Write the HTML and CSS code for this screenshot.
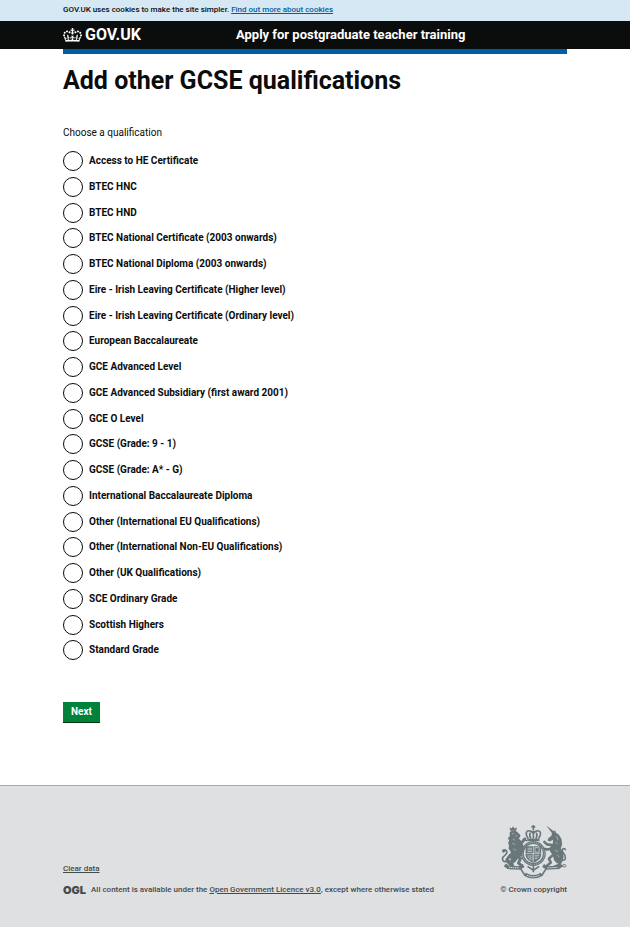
FILE: index.html
```html
<!DOCTYPE html>
<html lang="en">
<head>
<meta charset="utf-8">
<meta name="viewport" content="width=device-width, initial-scale=1">
<title>Add other GCSE qualifications - GOV.UK</title>
<link rel="stylesheet" href="styles.css">
</head>
<body>
<div class="cookie-banner">
  <p class="container cookie-text">GOV.UK uses cookies to make the site simpler. <a href="#cookies">Find out more about cookies</a></p>
</div>
<header class="header">
  <div class="container header-inner">
    <a class="logo" href="#home">
      <svg class="crown" viewBox="0 0 132 97" aria-hidden="true"><path fill="currentColor" fill-rule="evenodd" d="M25 30.2c3.5 1.5 7.7-.2 9.1-3.7 1.5-3.6-.2-7.8-3.9-9.2-3.6-1.4-7.6.3-9.1 3.9-1.4 3.5.3 7.5 3.9 9zM9 39.5c3.6 1.5 7.8-.2 9.2-3.7 1.5-3.6-.2-7.8-3.9-9.1-3.6-1.5-7.6.2-9.1 3.8-1.4 3.5.3 7.5 3.8 9zM4.4 57.2c3.5 1.5 7.7-.2 9.1-3.8 1.5-3.6-.2-7.7-3.9-9.1-3.5-1.5-7.6.3-9.1 3.8-1.4 3.5.3 7.6 3.9 9.1zm38.3-21.4c3.5 1.5 7.7-.2 9.1-3.8 1.5-3.6-.2-7.7-3.9-9.1-3.6-1.5-7.6.3-9.1 3.8-1.3 3.6.4 7.7 3.9 9.1zm64.4-5.6c-3.6 1.5-7.8-.2-9.1-3.7-1.5-3.6.2-7.8 3.8-9.2 3.6-1.4 7.7.3 9.2 3.9 1.3 3.5-.4 7.5-3.9 9zm15.9 9.3c-3.6 1.5-7.7-.2-9.1-3.7-1.5-3.6.2-7.8 3.7-9.1 3.6-1.5 7.7.2 9.2 3.8 1.5 3.5-.3 7.5-3.8 9zm4.7 17.7c-3.6 1.5-7.8-.2-9.2-3.8-1.5-3.6.2-7.7 3.9-9.1 3.6-1.5 7.7.3 9.2 3.8 1.3 3.5-.4 7.6-3.9 9.1zM89.3 35.8c-3.6 1.5-7.8-.2-9.2-3.8-1.4-3.6.2-7.7 3.9-9.1 3.6-1.5 7.7.3 9.2 3.8 1.4 3.6-.3 7.7-3.9 9.1zM69.7 17.7l8.9 4.7V9.3l-8.9 2.8c-.2-.3-.5-.6-.9-.9L72.4 0H59.6l3.5 11.2c-.3.3-.6.5-.9.9l-8.8-2.8v13.1l8.8-4.7c.3.3.6.7.9.9l-5 15.4v.1c-.2.8-.4 1.6-.4 2.4 0 4.1 3.1 7.5 7 8.1h.2c.3 0 .7.1 1 .1.4 0 .7 0 1-.1h.2c4-.6 7.1-4.1 7.1-8.1 0-.8-.1-1.7-.4-2.4V34l-5.1-15.4c.4-.2.7-.6 1-.9zM66 92.8c16.9 0 32.8 1.1 47.1 3.2 4-16.9 8.9-26.7 14-33.5l-9.6-3.4c1 4.9 1.1 7.2 0 10.2-1.5-1.4-3-4.3-4.2-8.7L108.6 76c2.8-2 5-3.2 7.5-3.3-4.4 9.4-10 11.9-13.6 11.2-4.3-.8-6.3-4.6-5.6-7.9 1-4.7 5.7-5.9 8-.5 4.3-8.7-3-11.4-7.6-8.8 7.1-7.2 7.9-13.5 2.1-21.1-8 6.1-8.1 12.3-4.5 20.8-4.7-5.4-12.1-2.5-9.5 6.2 3.4-5.2 7.9-2 7.2 3.1-.6 4.3-6.4 7.8-13.5 7.2-10.3-.9-10.9-8-11.2-13.8 2.5-.5 7.1 1.8 11 7.3L80.2 60c-4.1 4.4-8 5.3-12.3 5.4 1.4-4.4 8-11.6 8-11.6H55.5s6.4 7.2 7.9 11.6c-4.2-.1-8-1-12.3-5.4l1.4 16.4c3.9-5.5 8.5-7.7 10.9-7.3-.3 5.8-.9 12.8-11.1 13.8-7.2.6-12.9-2.9-13.5-7.2-.7-5 3.8-8.3 7.1-3.1 2.7-8.7-4.6-11.6-9.4-6.2 3.7-8.5 3.6-14.7-4.6-20.8-5.8 7.6-5 13.9 2.2 21.1-4.7-2.6-11.9.1-7.7 8.8 2.3-5.5 7.1-4.2 8.1.5.7 3.3-1.3 7.1-5.7 7.9-3.5.7-9-1.8-13.5-11.2 2.5.1 4.7 1.3 7.5 3.3l-4.7-15.4c-1.2 4.4-2.7 7.2-4.3 8.7-1.1-3-.9-5.3 0-10.2l-9.5 3.4c5 6.9 9.9 16.7 14 33.5 14.8-2.1 30.8-3.2 47.7-3.2z"/></svg>
      <span>GOV.UK</span>
    </a>
    <a class="service" href="#service">Apply for postgraduate teacher training</a>
  </div>
</header>
<main class="container main">
  <div class="bar"></div>
  <h1>Add other GCSE qualifications</h1>
  <form>
    <fieldset>
      <legend>Choose a qualification</legend>
      <div class="options">
        <label class="option"><input type="radio" name="q"><span>Access to HE Certificate</span></label>
        <label class="option"><input type="radio" name="q"><span>BTEC HNC</span></label>
        <label class="option"><input type="radio" name="q"><span>BTEC HND</span></label>
        <label class="option"><input type="radio" name="q"><span>BTEC National Certificate (2003 onwards)</span></label>
        <label class="option"><input type="radio" name="q"><span>BTEC National Diploma (2003 onwards)</span></label>
        <label class="option"><input type="radio" name="q"><span>Eire - Irish Leaving Certificate (Higher level)</span></label>
        <label class="option"><input type="radio" name="q"><span>Eire - Irish Leaving Certificate (Ordinary level)</span></label>
        <label class="option"><input type="radio" name="q"><span>European Baccalaureate</span></label>
        <label class="option"><input type="radio" name="q"><span>GCE Advanced Level</span></label>
        <label class="option"><input type="radio" name="q"><span>GCE Advanced Subsidiary (first award 2001)</span></label>
        <label class="option"><input type="radio" name="q"><span>GCE O Level</span></label>
        <label class="option"><input type="radio" name="q"><span>GCSE (Grade: 9 - 1)</span></label>
        <label class="option"><input type="radio" name="q"><span>GCSE (Grade: A* - G)</span></label>
        <label class="option"><input type="radio" name="q"><span>International Baccalaureate Diploma</span></label>
        <label class="option"><input type="radio" name="q"><span>Other (International EU Qualifications)</span></label>
        <label class="option"><input type="radio" name="q"><span>Other (International Non-EU Qualifications)</span></label>
        <label class="option"><input type="radio" name="q"><span>Other (UK Qualifications)</span></label>
        <label class="option"><input type="radio" name="q"><span>SCE Ordinary Grade</span></label>
        <label class="option"><input type="radio" name="q"><span>Scottish Highers</span></label>
        <label class="option"><input type="radio" name="q"><span>Standard Grade</span></label>
      </div>
    </fieldset>
    <button class="button" type="submit">Next</button>
  </form>
</main>
<footer class="footer">
  <div class="container footer-inner">
    <div class="meta">
      <a href="#clear">Clear data</a>
      <div class="licence">
        <span class="ogl">OGL</span>
        <p>All content is available under the <a href="#licence">Open Government Licence v3.0</a>, except where otherwise stated</p>
      </div>
    </div>
    <a class="copyright" href="#copyright">
      <svg class="arms" viewBox="0 0 204 168" aria-hidden="true">
        <!-- crown -->
        <g fill="none" stroke="currentColor" stroke-width="5">
          <path d="M100 2v16M94 8h12"/>
          <path d="M84 44C72 26 80 17 91 21c6 2 9 6 9 10 0-4 3-8 9-10 11-4 19 5 7 23M100 20v24M92 44c-4-8-4-14-1-18M108 44c4-8 4-14 1-18"/>
          <path d="M81 48h38" stroke-width="8"/>
        </g>
        <!-- shield inside the garter -->
        <circle cx="100" cy="90" r="34" fill="none" stroke="currentColor" stroke-width="9"/>
        <circle cx="100" cy="90" r="34" fill="none" stroke="#dee0e2" stroke-width="2" stroke-dasharray="3 3"/>
        <path fill="currentColor" d="M76 68h48v26c0 11-9 19-24 25-15-6-24-14-24-25z"/>
        <path fill="none" stroke="#dee0e2" stroke-width="2" d="M100 68v48M78 90h44M82 74h14M82 79h14M82 84h14M105 72v14h13V72zM84 94v8l8 8M90 94v14M96 94v18M104 96h14M104 101h12M104 106h8"/>
        <!-- lion -->
        <g fill="currentColor">
          <path d="M29 20l-3-10 7 3 4-7 5 7 7-3-2 10z"/>
          <path d="M27 24c7-6 20-6 25 1l8 8-1 7-5 2 9 10 7 15-1 18-7 12-8 9-16 3-9-8 1-16-7-10 2-9-3-8 3-8-4-8 6-5z"/>
          <path d="M25 92l18-4 12 14-9 12-8 7 4 10-8 4-10-10 6-16z"/>
        </g>
        <g fill="none" stroke="currentColor" stroke-linecap="round" stroke-linejoin="round">
          <path stroke-width="9" d="M52 60l14-5 6-9M54 72l13 3M46 92l14 14-6 14 10 8M28 96l-10 14 8 12"/>
          <path stroke-width="5" d="M72 46l4-3M72 48l6 2M26 112C5 122-1 106 11 97s8-22-5-17"/>
          <path stroke-width="7" d="M12 81l-5 3"/>
        </g>
        <!-- unicorn -->
        <g fill="currentColor">
          <path d="M140 4l26 20-7 5z"/>
          <path d="M158 24l9-5 3 7 9 6 8 13 2 17-4 12 6 12 3 16-8 14-13 4-9-9-4-16-9-12 2-14 7-10 1-11-10 5-7-3 2-7 10-8z"/>
        </g>
        <g fill="none" stroke="currentColor" stroke-linecap="round" stroke-linejoin="round">
          <path stroke-width="8" d="M158 64l-16-2-8-8M158 74l-14 4-8-2M164 92l-16 14 6 12-11 9M178 100l6 14-7 12-11 5"/>
          <path stroke-width="5" d="M184 108c20 10 17-11 9-19s-1-20 6-11"/>
          <path stroke-width="3" d="M168 112l14 13 13 7c7 2 8-9 0-8l-12 8M190 112l-9 16"/>
        </g>
        <path fill="none" stroke="#dee0e2" stroke-width="1.5" d="M34 29h7M36 45l8 5M34 58l10 5M38 76l9 5M50 35l-6 2M172 36l4 13M168 54l8 8M166 80l10 5M174 94l6 8"/>
        <!-- motto ribbon -->
        <g fill="none" stroke="currentColor" stroke-width="11">
          <path d="M12 125l10 8 35 2 13-8M188 125l-10 8-35 2-13-8"/>
          <path d="M74 154c16 10 36 10 52 0"/>
        </g>
        <path fill="none" stroke="currentColor" stroke-width="5" d="M60 136l14 22M140 136l-14 22M82 130l18 12 18-12M100 122v26"/>
        <path fill="none" stroke="#dee0e2" stroke-width="3" stroke-dasharray="4 2" d="M25 133l31 2M144 135l31-2M80 157c14 7 26 7 40 0"/>
      </svg>
      <span>© Crown copyright</span>
    </a>
  </div>
</footer>
</body>
</html>
```
FILE: styles.css
```css
* { box-sizing: border-box; }
body {
  margin: 0;
  min-height: 100vh;
  display: flex;
  flex-direction: column;
  font-family: Roboto, "Liberation Sans", sans-serif;
  font-size: 10px;
  line-height: 16px;
  color: #0b0c0c;
  background: #fff;
}
p { margin: 0; }
.container { width: 100%; padding: 0 10%; }
.cookie-banner { background: #d5e8f3; }
.cookie-text { padding-top: 2px; padding-bottom: 3px; font-size: 8px; font-weight: 500; }
.cookie-text a { color: #005ea5; }
.header { background: #0b0c0c; }
.header-inner {
  display: grid;
  grid-template-columns: 173px 1fr;
  align-items: center;
  height: 28px;
  color: #fff;
}
.header a { color: #fff; text-decoration: none; font-weight: 700; }
.logo { display: flex; align-items: center; gap: 3px; font-size: 16px; }
.crown { width: 19px; height: 14px; }
.service { font-size: 13px; }
.main { flex: 1; padding-bottom: 62px; }
.bar { height: 5px; background: #005ea5; }
h1 { margin: 11px 0 28px; font-size: 25px; line-height: 32px; font-weight: 700; }
fieldset { margin: 0; padding: 0; border: 0; min-width: 0; }
legend { padding: 0; margin-bottom: 10px; }
.option { display: flex; align-items: center; gap: 6px; margin-bottom: 6px; font-weight: 700; }
.option:nth-child(4n + 3) { margin-bottom: 5px; }
.option input {
  appearance: none;
  width: 20px;
  height: 20px;
  margin: 0;
  border: 1px solid #0b0c0c;
  border-radius: 50%;
  background: #fff;
}
.option input:checked { box-shadow: inset 0 0 0 4px #fff; background: #0b0c0c; }
.button {
  display: block;
  margin-top: 36px;
  padding: 1px 8px;
  border: 0;
  border-bottom: 1px solid #003618;
  background: #00823b;
  color: #fff;
  font: 700 10px/18px Roboto, "Liberation Sans", sans-serif;
}
.footer { border-top: 1px solid #a1acb2; background: #dee0e2; }
.footer-inner {
  display: flex;
  justify-content: space-between;
  align-items: flex-end;
  padding-top: 38px;
  padding-bottom: 29px;
  font-size: 8px;
  font-weight: 500;
}
.footer, .footer a { color: #454a4c; }
.meta { display: grid; gap: 5px; }
.licence { display: flex; align-items: center; gap: 5px; }
.ogl { font: 900 11px/16px Inter, sans-serif; }
.copyright { display: grid; justify-items: end; gap: 3px; text-decoration: none; }
.copyright .arms { width: 66px; height: 55px; color: #69777b; }
```
